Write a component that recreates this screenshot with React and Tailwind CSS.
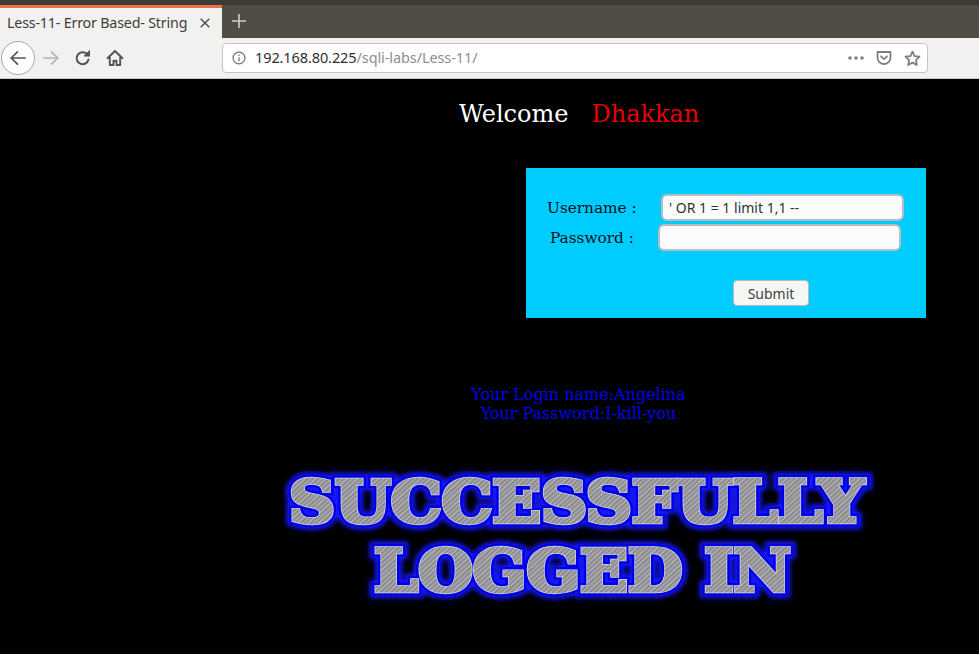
import React from "react";

const uiFont = { fontFamily: '"Noto Sans", "Open Sans", sans-serif' };

function Toolbar() {
    return (
        <div className="h-[41px] bg-[#f2f1ef] border-b border-[#c9c8c5] flex items-center">
            <button className="ml-[1px] w-[34px] h-[34px] rounded-full bg-white border border-[#a9a8a5] flex items-center justify-center">
                <svg width="18" height="18" viewBox="0 0 18 18" fill="none" stroke="#55534f" strokeWidth="1.7" strokeLinecap="round" strokeLinejoin="round">
                    <path d="M2 9h14M8.5 2.8 2.2 9l6.3 6.2" />
                </svg>
            </button>
            <svg className="ml-[7px]" width="18" height="18" viewBox="0 0 18 18" fill="none" stroke="#b4b3b0" strokeWidth="1.7" strokeLinecap="round" strokeLinejoin="round">
                <path d="M2 9h14M9.5 2.8 15.8 9l-6.3 6.2" />
            </svg>
            <svg className="ml-[14px]" width="18" height="18" viewBox="0 0 18 18" fill="none" stroke="#55534f" strokeWidth="2" strokeLinecap="round" strokeLinejoin="round">
                <path d="M14.5 10.5a6 6 0 1 1-1.7-5.7L15 6.5" />
                <path d="M15.5 2v5h-5z" fill="#55534f" strokeWidth="1" />
            </svg>
            <svg className="ml-[14px]" width="18" height="18" viewBox="0 0 18 18" fill="none" stroke="#55534f" strokeWidth="1.9" strokeLinejoin="round">
                <path d="M1.5 9.2 9 2l7.5 7.2" strokeLinecap="round" />
                <path d="M3.8 8v8h3.7v-4.2h3V16h3.7V8" />
            </svg>
            <div className="ml-[98px] w-[706px] h-[30px] bg-white border border-[#c5c4c1] rounded-[4px] flex items-center">
                <svg className="ml-[9px]" width="14" height="14" viewBox="0 0 14 14" fill="none" stroke="#6f6e6b" strokeWidth="1.2">
                    <circle cx="7" cy="7" r="5.9" />
                    <path d="M7 6.2v4M7 3.6v1.3" />
                </svg>
                <span className="ml-[9px] text-[14.5px] text-[#2f2f2f] tracking-[-0.1px] whitespace-nowrap">
                    192.168.80.225<span className="text-[#8f8e8c]">/sqli-labs/Less-11/</span>
                </span>
                <div className="ml-auto flex items-center">
                    <svg width="16" height="4" viewBox="0 0 16 4" fill="#7f7e7b">
                        <circle cx="2" cy="2" r="1.8" />
                        <circle cx="8" cy="2" r="1.8" />
                        <circle cx="14" cy="2" r="1.8" />
                    </svg>
                    <svg className="ml-[12px]" width="16" height="16" viewBox="0 0 16 16" fill="none" stroke="#7f7e7b" strokeWidth="1.8" strokeLinecap="round" strokeLinejoin="round">
                        <path d="M1.5 2h13v5.5a6.5 6.5 0 0 1-13 0z" />
                        <path d="m5 6.3 3 2.8 3-2.8" />
                    </svg>
                    <svg className="ml-[12px] mr-[6px]" width="17" height="17" viewBox="0 0 17 17" fill="none" stroke="#7f7e7b" strokeWidth="1.8" strokeLinejoin="round">
                        <path d="m8.5 1.6 2.1 4.5 4.9.6-3.6 3.4.9 4.9-4.3-2.4-4.3 2.4.9-4.9L1.5 6.7l4.9-.6z" />
                    </svg>
                </div>
            </div>
        </div>
    );
}

function TabBar() {
    return (
        <div className="h-[33px] bg-[#504d45] flex">
            <div className="w-[222px] bg-[#f2f1ef] border-t-[3px] border-[#ec7046] flex items-center">
                <span className="ml-[7px] text-[14.3px] text-[#3e3d3a] whitespace-nowrap tracking-[-0.2px]">Less-11- Error Based- String</span>
                <svg className="ml-auto mr-[12px]" width="10" height="10" viewBox="0 0 10 10" stroke="#55534f" strokeWidth="1.5">
                    <path d="m.7.7 8.6 8.6M9.3.7.7 9.3" />
                </svg>
            </div>
            <svg className="ml-[10px] mt-[9px]" width="14" height="14" viewBox="0 0 14 14" stroke="#cfcdc8" strokeWidth="1.6">
                <path d="M7 0v14M0 7h14" />
            </svg>
        </div>
    );
}

function LoginForm() {
    const fieldClass = "h-[27px] w-[243px] bg-[#fbfbfb] border-2 border-[#b5bcc2] rounded-[6px] px-[6px] text-[14px] text-[#333] outline-none";
    return (
        <form className="ml-[526px] mt-[39px] w-[400px] h-[150px] bg-[#00ccff] flex flex-col">
            <div className="mt-[26px] flex items-center h-[27px]">
                <label className="ml-[21px] w-[114px] pt-[2px] text-[15.3px] text-[#02131c] leading-none">Username :</label>
                <input style={uiFont} className={fieldClass} defaultValue="' OR 1 = 1 limit 1,1 --" />
            </div>
            <div className="mt-[3px] flex items-center h-[27px]">
                <label className="ml-[24px] w-[109px] pt-[2px] text-[15.3px] text-[#02131c] leading-none shrink-0 mr-[-1px]">Password :</label>
                <input style={uiFont} className={fieldClass} type="password" />
            </div>
            <button type="button" style={uiFont} className="mt-[29px] ml-[207px] w-[76px] h-[26px] bg-[#f6f6f5] border border-[#b9b9b7] rounded-[4px] text-[14px] text-[#444]">
                Submit
            </button>
        </form>
    );
}

function BannerLine({ x, y, len, children }) {
    const common = {
        x, y,
        textLength: len,
        lengthAdjust: "spacingAndGlyphs",
        fontFamily: '"DejaVu Serif", serif',
        fontWeight: 900,
        fontSize: 58,
        strokeLinejoin: "miter",
    };
    return (
        <>
            <text {...common} fill="#1414ff" stroke="#1414ff" strokeWidth="14" filter="url(#glow)">{children}</text>
            <text {...common} fill="#0000e6" stroke="#0000e6" strokeWidth="9">{children}</text>
            <text {...common} fill="#d8d8e4" stroke="#d8d8e4" strokeWidth="4.4">{children}</text>
            <text {...common} fill="url(#hatch)" stroke="url(#hatch)" strokeWidth="3">{children}</text>
        </>
    );
}

function Banner() {
    return (
        <svg className="ml-[275px] mt-[36px] block" width="606" height="150" viewBox="0 0 606 150">
            <defs>
                <pattern id="hatch" width="7" height="7" patternUnits="userSpaceOnUse" patternTransform="rotate(-42)">
                    <rect width="7" height="7" fill="#9a9a9e" />
                    <rect y="0" width="7" height="1" fill="#b8b8ba" />
                    <rect y="2" width="7" height="1" fill="#808084" />
                    <rect y="3.5" width="7" height="1" fill="#acacae" />
                    <rect y="5.5" width="7" height="1" fill="#848488" />
                </pattern>
                <filter id="glow" x="-10%" y="-30%" width="120%" height="160%">
                    <feGaussianBlur stdDeviation="2.5" />
                </filter>
            </defs>
            <BannerLine x={14} y={64} len={575}>SUCCESSFULLY</BannerLine>
            <BannerLine x={99} y={133} len={417}>LOGGED IN</BannerLine>
        </svg>
    );
}

export default function App() {
    return (
        <div className="w-[979px] h-[654px] overflow-hidden bg-black flex flex-col">
            <div style={uiFont}>
                <div className="h-[5px] bg-[#3c3b37]" />
                <TabBar />
                <Toolbar />
            </div>
            <div className="flex-1 flex flex-col" style={{ fontFamily: '"DejaVu Serif", serif' }}>
                <div className="mt-[20px] h-[30px] ml-[459px] text-[24px] leading-[30px] text-white whitespace-nowrap">
                    Welcome<span className="ml-[23px] text-[#e80000]">Dhakkan</span>
                </div>
                <LoginForm />
                <div className="mt-[67px] h-[37px] ml-[178px] w-[801px] text-center text-[#0000e8] text-[16px] leading-[19px]">
                    <div>Your Login name:Angelina</div>
                    <div>Your Password:I-kill-you</div>
                </div>
                <Banner />
            </div>
        </div>
    );
}
